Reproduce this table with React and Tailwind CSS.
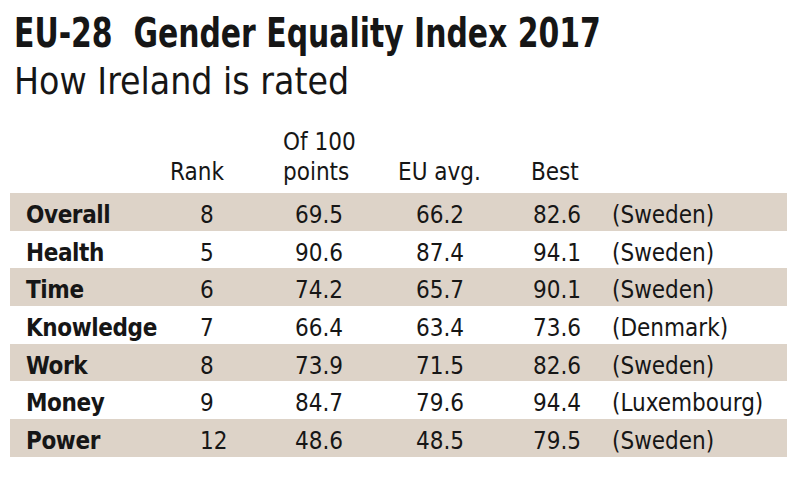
const rows = [
  { label: "Overall", rank: "8", points: "69.5", eu: "66.2", best: "82.6", country: "(Sweden)" },
  { label: "Health", rank: "5", points: "90.6", eu: "87.4", best: "94.1", country: "(Sweden)" },
  { label: "Time", rank: "6", points: "74.2", eu: "65.7", best: "90.1", country: "(Sweden)" },
  { label: "Knowledge", rank: "7", points: "66.4", eu: "63.4", best: "73.6", country: "(Denmark)" },
  { label: "Work", rank: "8", points: "73.9", eu: "71.5", best: "82.6", country: "(Sweden)" },
  { label: "Money", rank: "9", points: "84.7", eu: "79.6", best: "94.4", country: "(Luxembourg)" },
  { label: "Power", rank: "12", points: "48.6", eu: "48.5", best: "79.5", country: "(Sweden)" },
];

const font = { fontFamily: '"DejaVu Sans Condensed", "DejaVu Sans", sans-serif' };

export default function App() {
  return (
    <div className="w-[800px] h-[483px] bg-white text-[#161616] overflow-hidden" style={font}>
      <div className="pl-[14px] pt-[11px]">
        <h1 className="text-[40px] leading-[44px] font-bold whitespace-nowrap origin-left scale-x-[0.83]">
          EU-28&nbsp; Gender Equality Index 2017
        </h1>
        <h2 className="mt-[4px] text-[38px] leading-[44px] whitespace-nowrap origin-left scale-x-[0.975]">
          How Ireland is rated
        </h2>
      </div>

      <div className="mt-[24px] pl-[10px] grid grid-cols-[160px_113px_115px_133px_1fr] items-end text-[24px] leading-[30px]">
        <div />
        <div>Rank</div>
        <div>
          Of 100
          <br />
          points
        </div>
        <div>EU avg.</div>
        <div>Best</div>
      </div>

      <div className="mt-[6px] ml-[10px] w-[777px]">
        {rows.map((r, i) => (
          <div
            key={r.label}
            className={
              "h-[37.7px] pl-[16px] pt-[6px] grid grid-cols-[174px_95px_121px_117px_79px_1fr] items-center text-[24px] leading-[28px] " +
              (i % 2 === 0 ? "bg-[#ddd3c8]" : "")
            }
          >
            <div className="font-bold tracking-[-0.4px]">{r.label}</div>
            <div>{r.rank}</div>
            <div>{r.points}</div>
            <div>{r.eu}</div>
            <div>{r.best}</div>
            <div>{r.country}</div>
          </div>
        ))}
      </div>
    </div>
  );
}
